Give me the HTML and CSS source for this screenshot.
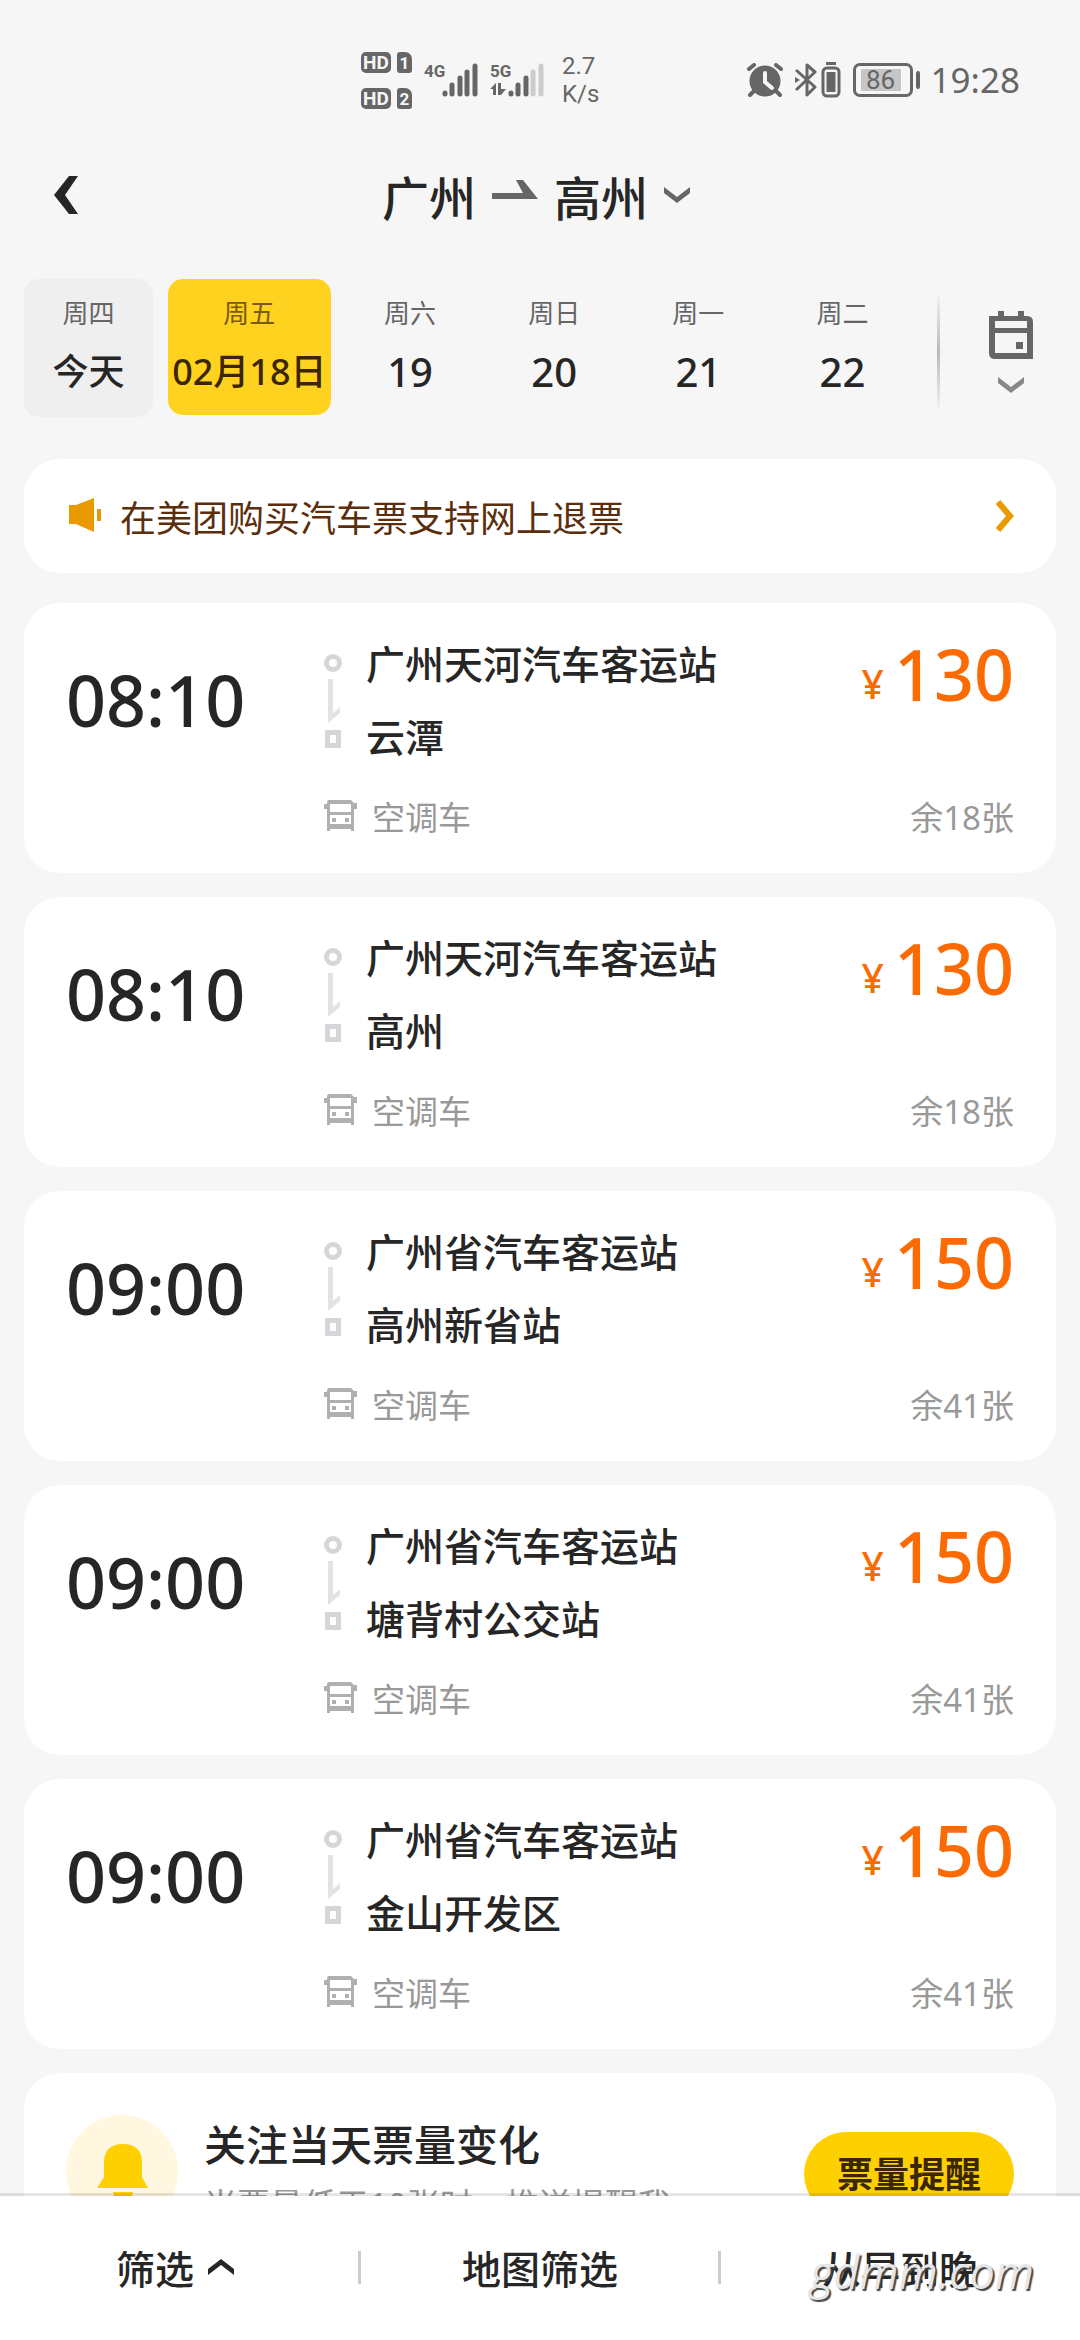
FILE: index.html
```html
<!DOCTYPE html>
<html lang="zh-CN">
<head>
  <meta charset="UTF-8" />
  <meta name="viewport" content="width=device-width, initial-scale=1" />
  <title>广州 - 高州 汽车票</title>
  <link rel="stylesheet" href="styles.css">
</head>
<body>
  <!-- shared icons -->
  <svg class="sprite" aria-hidden="true">
    <symbol id="icon-down" viewBox="0 0 14 44">
      <path fill="#e3e3e3" d="M2 0h5v34l7-6v6L2 44z" />
    </symbol>
    <symbol id="icon-bus" viewBox="0 0 33 31">
      <path fill-rule="evenodd" fill="#b0b0b0" d="M4 0h23l3 3h3v6h-3v22h-3v-2H6v2H3V9H0V4h3V2zM6 4v8h21V4zM6 15v9h21v-9z" />
      <path fill="#b0b0b0" d="M8 18h4v4H8zM21 18h4v4h-4z" />
    </symbol>
  </svg>

  <div class="app">
    <div class="status-bar">
      <div class="sims">
        <div class="sim-row"><span class="hd">HD</span><span class="sim">1</span></div>
        <div class="sim-row"><span class="hd">HD</span><span class="sim">2</span></div>
      </div>
      <div class="network">
        <span class="net-type">4G</span>
        <svg class="signal" viewBox="0 0 36 34" fill="none" stroke="#666" stroke-width="5" stroke-linecap="round">
          <path d="M3 30v1M10 22v9M18 15v16M25 9v22M33 3v28" />
        </svg>
      </div>
      <div class="network">
        <span class="net-type">5G</span>
        <svg class="traffic" viewBox="0 0 16 12" fill="#666">
          <path d="M0 6 6 0v12H3V6zM8 0h3v6h5l-5 6H8z" />
        </svg>
        <svg class="signal" viewBox="0 0 36 34" fill="none" stroke="#666" stroke-width="5" stroke-linecap="round">
          <path d="M3 30v1M10 22v9M18 15v16" />
          <path d="M25 9v22M33 3v28" stroke="#ccc" />
        </svg>
      </div>
      <div class="speed">2.7<br>K/s</div>
      <div class="status-right">
        <svg class="alarm" viewBox="0 0 36 34">
          <circle cx="18" cy="18" r="15.500" fill="#666" />
          <path d="M7 28l-4 4M29 28l4 4M2 6l5-4M34 6l-5-4" stroke="#666" stroke-width="4" stroke-linecap="round" />
          <path d="M18 10v9l7 6" fill="none" stroke="#f6f6f6" stroke-width="4" stroke-linecap="round" />
        </svg>
        <svg class="bluetooth" viewBox="0 0 46 36" fill="none" stroke="#666" stroke-width="3">
          <path d="M1 8l19 17-8 8V3l8 7L1 28" stroke-linejoin="round" />
          <path d="M0 15l5 3-5 3z" fill="#666" stroke="none" />
          <rect x="28" y="6" width="16" height="28" rx="4" />
          <path d="M31 1.500h10" />
          <path d="M31.500 10h9v20h-9z" fill="#666" stroke="none" />
        </svg>
        <span class="battery"><span class="battery-level">86</span></span>
        <span class="clock">19:28</span>
      </div>
    </div>

    <header class="header">
      <button class="back" aria-label="返回">
        <svg viewBox="0 0 24 38" width="24" height="38"><path d="M15 0h9L11 19l13 19h-9L0 19z" fill="#262626" /></svg>
      </button>
      <h1 class="title">
        <button class="route-btn">
          <span>广州</span>
          <svg class="to" viewBox="0 0 46 20" width="46" height="20"><path d="M0 13h31L24 0h7l15 19H0z" fill="#666" /></svg>
          <span>高州</span>
          <svg viewBox="0 0 26 16" width="26" height="16"><path d="M0 0l13 10L26 0v6L13 16 0 6z" fill="#666" /></svg>
        </button>
      </h1>
    </header>

    <nav class="dates" aria-label="出发日期">
      <button class="date today"><span class="week">周四</span><span class="day">今天</span></button>
      <button class="date active"><span class="week">周五</span><span class="day">02月18日</span></button>
      <button class="date"><span class="week">周六</span><span class="day num">19</span></button>
      <button class="date"><span class="week">周日</span><span class="day num">20</span></button>
      <button class="date"><span class="week">周一</span><span class="day num">21</span></button>
      <button class="date"><span class="week">周二</span><span class="day num">22</span></button>
      <button class="calendar" aria-label="选择日期">
        <svg viewBox="0 0 44 48" width="44" height="48" fill="#666">
          <path fill-rule="evenodd" d="M0 5h9V0h6v5h14V0h6v5h3q6 0 6 6v37H6q-6 0-6-6zM6 10v7h32v-7zM6 22v20h32V22z" />
          <path d="M27 31h7v7h-7z" />
        </svg>
        <svg viewBox="0 0 26 16" width="26" height="16"><path d="M0 0l13 10L26 0v6L13 16 0 6z" fill="#888" /></svg>
      </button>
    </nav>

    <main class="content">
      <a class="notice" href="#">
        <svg viewBox="0 0 33 36" width="33" height="36" fill="#ea9a00"><path d="M0 7h7L25 0v34L7 26H0zM28 11h4v12h-4z" /></svg>
        <span class="notice-text">在美团购买汽车票支持网上退票</span>
        <svg viewBox="0 0 20 32" width="20" height="32"><path d="M4 2l12 14L4 30" fill="none" stroke="#ea9a00" stroke-width="6" /></svg>
      </a>

      <ul class="trips">
        <li>
          <a class="trip" href="#">
            <span class="time">08:10</span>
            <span class="stops">
              <span class="line"><i class="dot"></i><svg width="14" height="44"><use href="#icon-down" /></svg><i class="box"></i></span>
              <span class="names"><span>广州天河汽车客运站</span><span>云潭</span></span>
            </span>
            <span class="price"><small>¥</small>130</span>
            <span class="type"><svg width="33" height="31"><use href="#icon-bus" /></svg>空调车</span>
            <span class="left">余18张</span>
          </a>
        </li>
        <li>
          <a class="trip" href="#">
            <span class="time">08:10</span>
            <span class="stops">
              <span class="line"><i class="dot"></i><svg width="14" height="44"><use href="#icon-down" /></svg><i class="box"></i></span>
              <span class="names"><span>广州天河汽车客运站</span><span>高州</span></span>
            </span>
            <span class="price"><small>¥</small>130</span>
            <span class="type"><svg width="33" height="31"><use href="#icon-bus" /></svg>空调车</span>
            <span class="left">余18张</span>
          </a>
        </li>
        <li>
          <a class="trip" href="#">
            <span class="time">09:00</span>
            <span class="stops">
              <span class="line"><i class="dot"></i><svg width="14" height="44"><use href="#icon-down" /></svg><i class="box"></i></span>
              <span class="names"><span>广州省汽车客运站</span><span>高州新省站</span></span>
            </span>
            <span class="price"><small>¥</small>150</span>
            <span class="type"><svg width="33" height="31"><use href="#icon-bus" /></svg>空调车</span>
            <span class="left">余41张</span>
          </a>
        </li>
        <li>
          <a class="trip" href="#">
            <span class="time">09:00</span>
            <span class="stops">
              <span class="line"><i class="dot"></i><svg width="14" height="44"><use href="#icon-down" /></svg><i class="box"></i></span>
              <span class="names"><span>广州省汽车客运站</span><span>塘背村公交站</span></span>
            </span>
            <span class="price"><small>¥</small>150</span>
            <span class="type"><svg width="33" height="31"><use href="#icon-bus" /></svg>空调车</span>
            <span class="left">余41张</span>
          </a>
        </li>
        <li>
          <a class="trip" href="#">
            <span class="time">09:00</span>
            <span class="stops">
              <span class="line"><i class="dot"></i><svg width="14" height="44"><use href="#icon-down" /></svg><i class="box"></i></span>
              <span class="names"><span>广州省汽车客运站</span><span>金山开发区</span></span>
            </span>
            <span class="price"><small>¥</small>150</span>
            <span class="type"><svg width="33" height="31"><use href="#icon-bus" /></svg>空调车</span>
            <span class="left">余41张</span>
          </a>
        </li>
      </ul>

      <section class="remind">
        <svg viewBox="0 0 112 112" width="112" height="112">
          <circle cx="56" cy="56" r="56" fill="#fff7df" />
          <path d="M38 48q0-19 19-19t19 19v14l6 11H31l7-11zM47 77h20q-1 8-10 8t-10-8z" fill="#ffd000" />
        </svg>
        <div class="remind-text">
          <h2>关注当天票量变化</h2>
          <p>当票量低于10张时，推送提醒我</p>
        </div>
        <button class="remind-btn">票量提醒</button>
      </section>
    </main>

    <footer class="filters">
      <button class="more">筛选<svg viewBox="0 0 26 16" width="26" height="16"><path d="M0 16l13-10 13 10v-6L13 0 0 10z" fill="#262626" /></svg></button>
      <button>地图筛选</button>
      <button>从早到晚</button>
      <span class="watermark">gdmm.com</span>
    </footer>
  </div>
</body>
</html>
```
FILE: styles.css
```css
:root {
  --bg: #f6f6f6;
  --text: #262626;
  --grey: #666;
  --muted: #999;
  --yellow: #ffd21f;
  --orange: #fc6a04;
  --side: 24px;
  --radius: 36px;
}

* {
  box-sizing: border-box;
}

body {
  margin: 0;
  background: var(--bg);
  color: var(--text);
  font-family: "Noto Sans", "Noto Sans CJK SC", sans-serif;
  font-weight: 500;
}

button {
  margin: 0;
  padding: 0;
  border: none;
  background: none;
  color: inherit;
  font: inherit;
  cursor: pointer;
}

a {
  color: inherit;
  text-decoration: none;
}

svg {
  display: block;
  flex: none;
}

.sprite {
  position: absolute;
  width: 0;
  height: 0;
}

.app {
  display: flex;
  flex-direction: column;
  height: 100vh;
}

/* status bar */
.status-bar {
  display: flex;
  align-items: center;
  height: 120px;
  padding: 40px 60px 0 361px;
  color: var(--grey);
  font-weight: 400;
}

.sims {
  display: flex;
  flex-direction: column;
  gap: 15px;
}

.sim-row {
  display: flex;
  gap: 6px;
}

.hd,
.sim {
  width: 30px;
  height: 21px;
  border-radius: 5px;
  background: var(--grey);
  color: var(--bg);
  font: 700 19px/22px Roboto, sans-serif;
  text-align: center;
}

.sim {
  width: 15px;
  border-radius: 3px 7px 3px 3px;
  font-size: 17px;
}

.network {
  display: grid;
  grid-template-columns: 18px 36px;
  align-content: space-between;
  height: 34px;
  margin-left: 12px;
}

.net-type {
  font: 700 17px/17px Roboto, sans-serif;
}

.signal {
  grid-row: 1 / 3;
  grid-column: 2;
  width: 36px;
  height: 34px;
}

.traffic {
  width: 16px;
  height: 12px;
}

.speed {
  margin-left: 18px;
  font: 400 24px/28px Roboto, sans-serif;
}

.status-right {
  display: flex;
  align-items: center;
  gap: 12px;
  margin-left: auto;
}

.alarm {
  width: 36px;
  height: 34px;
}

.bluetooth {
  width: 46px;
  height: 36px;
}

.battery {
  position: relative;
  width: 60px;
  height: 34px;
  margin-right: 6px;
  padding: 3px 5px;
  border: 3px solid var(--grey);
  border-radius: 7px;
}

.battery::after {
  content: "";
  position: absolute;
  top: 5px;
  right: -10px;
  width: 4px;
  height: 18px;
  border-radius: 2px;
  background: var(--grey);
}

.battery-level {
  display: block;
  width: 40px;
  height: 22px;
  background: #c6c6c6;
  font: 400 26px/22px Roboto, sans-serif;
  text-align: center;
}

.clock {
  font-size: 35px;
  line-height: 36px;
}

/* title row */
.header {
  display: grid;
  grid-template-columns: 1fr auto 1fr;
  align-items: center;
  height: 154px;
  padding: 0 62px 4px 54px;
}

.back {
  width: 24px;
}

.title {
  margin: 0;
  font-size: 47px;
  font-weight: 500;
}

.route-btn {
  display: flex;
  align-items: center;
  gap: 16px;
}

.to {
  margin-bottom: 10px;
}

/* date tabs */
.dates {
  display: flex;
  align-items: flex-start;
  gap: 15px;
  padding: 5px var(--side) 0;
}

.date {
  display: flex;
  flex: 1;
  flex-direction: column;
  align-items: center;
  gap: 16px;
  padding: 16px 0 18px;
  border-radius: 15px;
}

.today {
  padding-bottom: 20px;
  background: #efefef;
}

.active {
  flex: none;
  padding-left: 4px;
  padding-right: 4px;
  background: var(--yellow);
  color: #3a2600;
}

.week {
  color: var(--grey);
  font-size: 26px;
  font-weight: 400;
  line-height: 36px;
}

.active .week {
  color: #7a5a10;
}

.day {
  font-size: 36px;
  line-height: 50px;
}

.day.num {
  font-size: 40px;
}

.calendar {
  display: flex;
  flex-direction: column;
  align-items: center;
  justify-content: center;
  gap: 18px;
  width: 119px;
  height: 120px;
  margin: 13px 0 0 15px;
  padding-left: 26px;
  border-left: 3px solid;
  border-image: linear-gradient(var(--bg), #b8b8b8, var(--bg)) 1;
}

/* scrolling list */
.content {
  flex: 1;
  min-height: 0;
  padding: 42px var(--side) 24px;
  overflow-y: auto;
  scrollbar-width: none;
}

.notice {
  display: flex;
  align-items: center;
  gap: 18px;
  height: 114px;
  margin-bottom: 30px;
  padding: 0 42px 0 45px;
  border-radius: var(--radius);
  background: #fff;
  color: #5c2e0c;
}

.notice-text {
  flex: 1;
  font-size: 36px;
  font-weight: 400;
}

.trips {
  margin: 0;
  padding: 0;
  list-style: none;
}

.trip {
  display: grid;
  grid-template-columns: 258px 1fr auto;
  row-gap: 20px;
  margin-bottom: 24px;
  padding: 24px 42px 30px;
  border-radius: var(--radius);
  background: #fff;
}

.time {
  grid-row: 1 / 3;
  padding-top: 38px;
  font-size: 70px;
  line-height: 70px;
}

.stops {
  display: flex;
  gap: 24px;
}

.line {
  display: flex;
  flex-direction: column;
  align-items: center;
  gap: 7px;
  width: 18px;
  padding-top: 27px;
}

.dot,
.box {
  width: 18px;
  height: 18px;
  border: 5px solid #d6d6da;
  border-radius: 50%;
}

.box {
  width: 16px;
  border-radius: 0;
}

.names {
  display: flex;
  flex-direction: column;
  font-size: 39px;
  line-height: 73px;
}

.price {
  padding-top: 12px;
  color: var(--orange);
  font-size: 70px;
  line-height: 70px;
}

.price small {
  margin-right: 10px;
  font-size: 39px;
  vertical-align: 2px;
}

.type,
.left {
  color: var(--muted);
  font-size: 33px;
  font-weight: 400;
  line-height: 50px;
}

.type {
  display: flex;
  gap: 15px;
}

.type svg {
  margin-top: 7px;
}

.left {
  text-align: right;
}

.remind {
  display: flex;
  padding: 42px;
  border-radius: var(--radius);
  background: #fff;
}

.remind-text {
  flex: 1;
  margin-left: 26px;
}

.remind h2 {
  margin: 0;
  font-size: 42px;
  font-weight: 500;
  line-height: 60px;
}

.remind p {
  margin: 6px 0 0;
  color: var(--muted);
  font-size: 33px;
  font-weight: 400;
  line-height: 48px;
}

.remind-btn {
  width: 210px;
  height: 84px;
  margin-top: 17px;
  padding-bottom: 3px;
  border-radius: 42px;
  background: #ffd000;
  color: #3a2600;
  font-size: 36px;
  font-weight: 700;
}

/* bottom filter bar */
.filters {
  position: relative;
  display: grid;
  grid-template-columns: repeat(3, 1fr);
  height: 147px;
  margin-top: -3px;
  border-top: 3px solid rgba(0, 0, 0, 0.1);
  background: #fff;
  background-clip: padding-box;
}

.filters button {
  position: relative;
  display: flex;
  align-items: center;
  justify-content: center;
  gap: 14px;
  padding-bottom: 2px;
  font-size: 39px;
}

.filters .more {
  padding-right: 10px;
}

.filters button + button::before {
  content: "";
  position: absolute;
  left: -2px;
  width: 3px;
  height: 33px;
  background: #ccc;
}

.watermark {
  position: absolute;
  right: 46px;
  bottom: 40px;
  color: #e6e6e6;
  font: italic 400 45px/56px "Open Sans", sans-serif;
  text-shadow: 2px 2px 1px #444;
}
```
